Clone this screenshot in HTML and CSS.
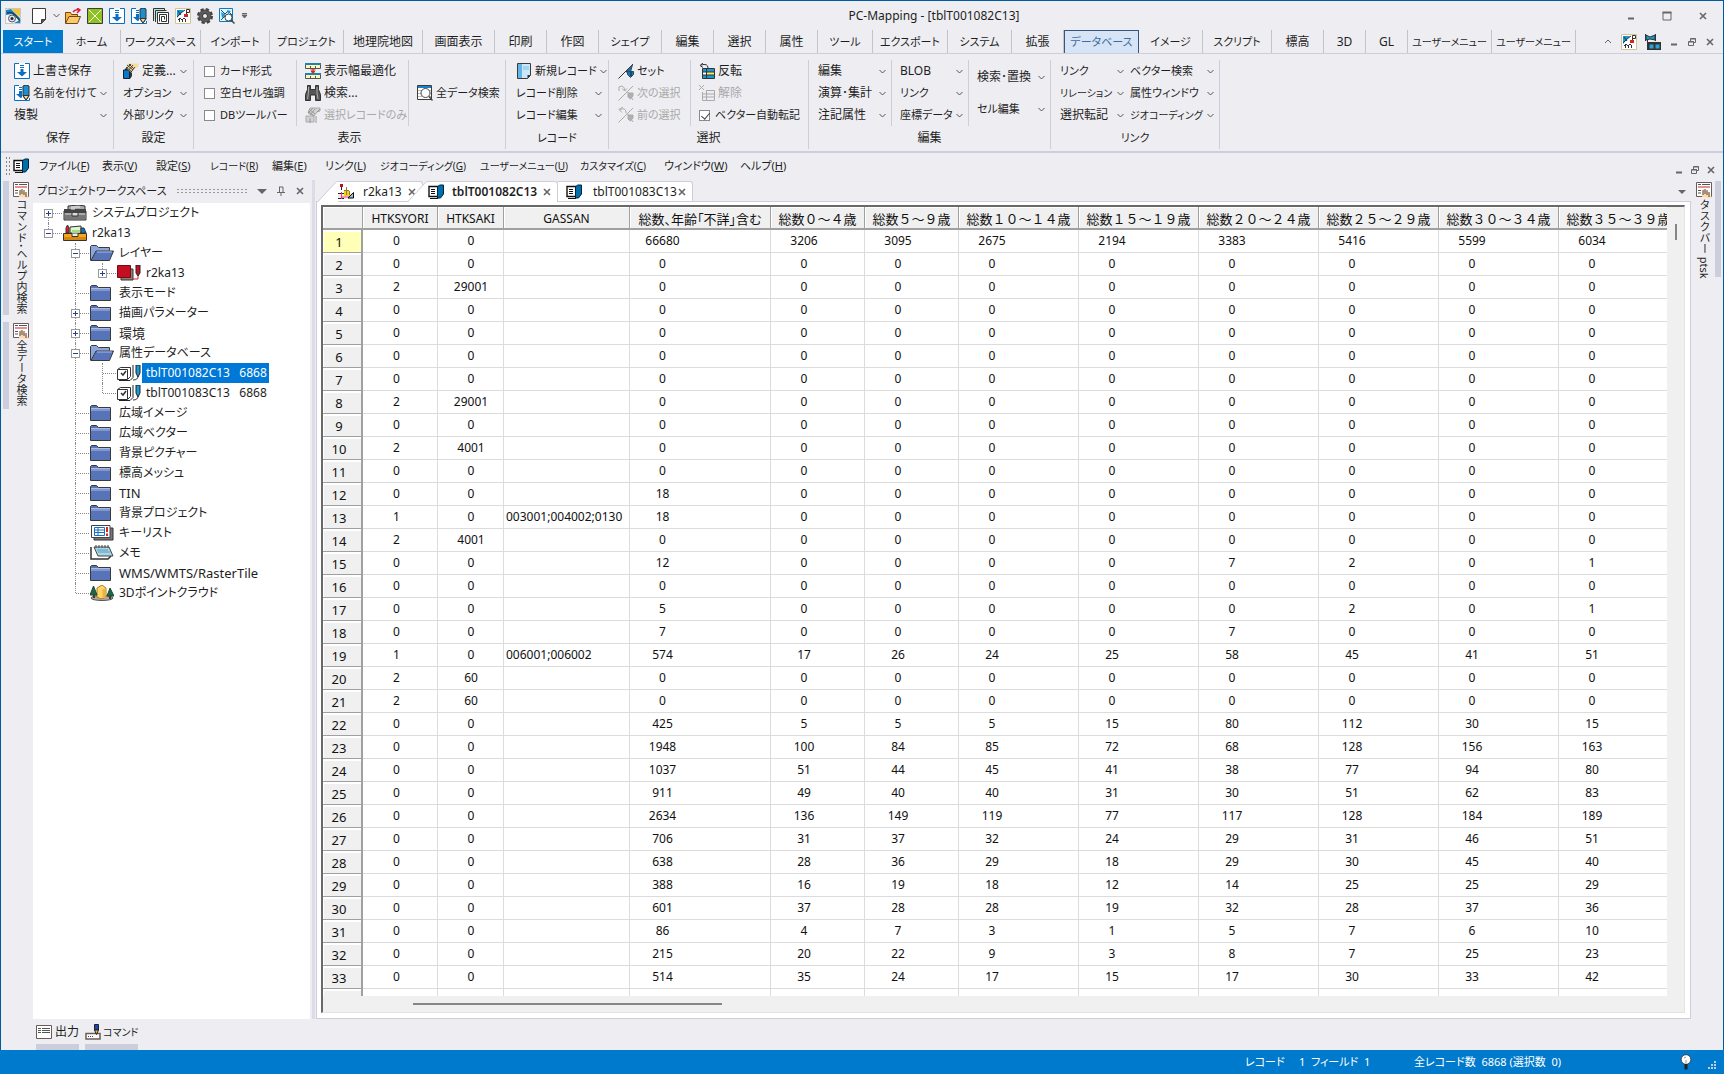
FILE: index.html
```html
<!DOCTYPE html>
<html lang="ja">
<head>
<meta charset="utf-8">
<title>PC-Mapping - [tblT001082C13]</title>
<link rel="stylesheet" href="styles.css">
</head>
<body>
<svg class="defs" aria-hidden="true">
<symbol id="app" viewBox="0 0 16 16"><rect x=".5" y=".5" width="15" height="15" fill="#f4f6f8" stroke="#c8c8c8"/><path d="M1 2l5-1 9 9v5H9l6-3-8-6-6 1z" fill="#1686c9"/><path d="M6 1h9v8z" fill="#f5c531"/><path d="M2 5q5-2 9 3l4 5" fill="none" stroke="#245" stroke-width="1.500"/><circle cx="7" cy="10.500" r="3.500" fill="#dde7ee" stroke="#556"/><circle cx="7" cy="10.500" r="1.500" fill="#223"/></symbol>
<symbol id="page" viewBox="0 0 16 16"><path d="M1.500.5h13v11l-4 4h-9z" fill="#fff" stroke="#3c3c3c"/><path d="M14.500 11.500h-4v4" fill="#555" stroke="#3c3c3c"/></symbol>
<symbol id="open" viewBox="0 0 16 16"><path d="M.5 15V4.500h5l1 2h6V9" fill="#ffb53a" stroke="#6b4a1a"/><path d="M.5 15.500L4 8.500h11.500l-3 7z" fill="#ffc96a" stroke="#6b4a1a"/><path d="M8 4q2-3 6-2M12 0l3 2-3 3" fill="none" stroke="#e01b3c" stroke-width="1.500"/></symbol>
<symbol id="green" viewBox="0 0 16 16"><path fill="#8dc21f" stroke="#3c3c3c" d="M.5.5h15v15H.5z"/><path d="M2 2l12 12M14 2L2 14" stroke="#fff"/></symbol>
<symbol id="save" viewBox="0 0 16 16"><path fill="#fff" stroke="#0a6fc2" d="M5 .5H.5v15h15V.5H11"/><path d="M6 2.500h4M6 4.500h4" stroke="#0a6fc2"/><path d="M6.500 6h3v3H13l-5 4.500L3 9h3.500z" fill="#0a6fc2"/></symbol>
<symbol id="saveas" viewBox="0 0 16 16"><path fill="#fff" stroke="#0a6fc2" d="M5 .5H.5v15h15V13"/><path d="M5 2.500h3M5 4.500h3" stroke="#0a6fc2"/><path d="M5 6h3v6.500L6.500 13 2 9h3z" fill="#0a6fc2"/><path d="M9 1q3-2 6 0v10l-3 4-3-4z" fill="#1b8fd0" stroke="#333"/><path d="M9 10.500h6l-3 4.500z" fill="#ffcf9a" stroke="#333"/></symbol>
<symbol id="spiral" viewBox="0 0 16 16"><path d="M.5 13V.5h11V3" fill="#bfe3d6" stroke="#333"/><path d="M2.500 14V2.500h11" fill="none" stroke="#333"/><path d="M4.500 4.500h11v11h-11z" fill="#fff" stroke="#333"/><path d="M6.500 13.500v-7h7v7h-5v-5h3v3" fill="none" stroke="#333"/></symbol>
<symbol id="map" viewBox="0 0 16 16"><path fill="#fff" stroke="#d4c594" d="M.5.5h15v15H.5z"/><path d="M2 2h7L2 10z" fill="#0b9bd8"/><path d="M2 9l4-4 4-3M3 3l3 4M4.500 14v-4M7.500 14v-3M10.500 14v-3M3 12l2-2 2 2 2-2 2 2M11.500 7V1.500h3v3h-3" stroke="#333" fill="none"/><path d="M9 6h4v3H9z" fill="#d8222a"/></symbol>
<symbol id="gear" viewBox="0 0 16 16"><circle cx="8" cy="8" r="6.500" fill="#555" stroke="#444" stroke-width="3" stroke-dasharray="3.100 2"/><circle cx="8" cy="8" r="5.800" fill="#5a5a5a"/><circle cx="8" cy="8" r="2.500" fill="#eee" stroke="#333"/></symbol>
<symbol id="mapsearch" viewBox="0 0 16 16"><path fill="#e8f5fc" stroke="#0a78c2" d="M.5.5h13v13H.5z"/><path d="M2 2l4 4 3-3 4 4M2 12l4-4" stroke="#156" fill="none"/><path d="M2 4l5 3-4 3zM8 2l4 1-3 3z" fill="#1c9bd8"/><circle cx="9.500" cy="9.500" r="3.500" fill="#fff" stroke="#444"/><path d="M12 12l3.500 3.500" stroke="#444" stroke-width="1.500"/></symbol>
<symbol id="define" viewBox="0 0 16 16"><path d="M2 6l1-1h6v8l-2 3H2z" fill="#333"/><path d="M.5 7h6v8.500h-6z" fill="#0a78c8" stroke="#123"/><path d="M5 .5h10.500V4L12 5l-3 5-6-5z" fill="#f6dd9e"/><path d="M3 4l6 5M4 2l6 5M6 1l5 5M3 6l5-5M5 8l5-6M8 9l4-5" stroke="#444"/></symbol>
<symbol id="fit" viewBox="0 0 16 16"><path fill="#fff9b0" stroke="#555" d="M.5 1.500h15v4H.5zM.5 11.500h15v4H.5z"/><path d="M0 1h16M0 11h16" stroke="#1c7fc0" stroke-width="2"/><path d="M5.500 3v2M10.500 3v2M5.500 13v2M10.500 13v2" stroke="#555"/><path d="M8 6v4M6 8.500L8 10l2-1.500zM5.500 7h5" fill="#d22" stroke="#d22"/></symbol>
<symbol id="bino" viewBox="0 0 16 16"><path d="M2.500.5h3v4h5v-4h3v4l2 5v6h-5V10H5.500v5.500h-5v-6l2-5z" fill="#555" stroke="#333"/><path d="M3.500 2v5l-1 7M12 2v6l1 6" stroke="#aaa" fill="none"/></symbol>
<symbol id="handg" viewBox="0 0 16 16"><path d="M1 9h8v6H1zM5 1h10v3l-3 1-3 4-6-3z" fill="#d2d2d2" stroke="#aaa"/><path d="M3 4l6 5M4 2l6 5M3 6l5-5M5 8l5-6M11 9v7M5 11v5M12 5l3-3" stroke="#999" fill="none"/></symbol>
<symbol id="dsearch" viewBox="0 0 16 16"><path fill="#fff" stroke="#3c3c3c" d="M.5.5h14v14H.5z"/><path d="M1 2h13" stroke="#1683cc" stroke-width="2"/><path d="M1 5.500h13M1 8.500h13M1 11.500h13" stroke="#bbb"/><circle cx="8.500" cy="8" r="4.500" fill="#fff" stroke="#444"/><path d="M12 11.500l3.500 4" stroke="#444" stroke-width="1.500"/></symbol>
<symbol id="newrec" viewBox="0 0 16 16"><path d="M1.500.5h13v12l-3 3h-10z" fill="#c9e9fb" stroke="#3c3c3c"/><path d="M2 1h4v14H2z" fill="#63b6e6"/><path d="M7 4h6M7 6h6" stroke="#7fbfe6"/><path d="M14.500 12h-3v3.500" fill="#333"/></symbol>
<symbol id="set" viewBox="0 0 16 16"><path d="M.5 15.500L15 1" stroke="#333"/><path d="M14.500 1.500L8 9h4.500z" fill="#127cb8" stroke="#345"/><path d="M9.500 8.500h6v3l-3 3-3-3z" fill="#127cb8" stroke="#345"/><path d="M13 9v4" stroke="#024"/></symbol>
<symbol id="next" viewBox="0 0 16 16"><path d="M.5 15.500L15 1M1 6V2q5-3 6 4M4 3.500L6.500 6 9 3.500M9 6l6 9" stroke="#aaa" fill="none"/><path d="M10 8h5v3l-2.500 3L10 12z" fill="#b0b0b0" stroke="#aaa"/></symbol>
<symbol id="prev" viewBox="0 0 16 16"><path d="M.5 15.500L15 1M8 6Q8 0 2 2.500M5 0L1 2.500l3 3M9 6l6 9" stroke="#aaa" fill="none"/><path d="M10 8h5v3l-2.500 3L10 12z" fill="#b0b0b0" stroke="#aaa"/></symbol>
<symbol id="invert" viewBox="0 0 16 16"><path d="M9 5Q9 0 2 2M4 0L1 2.500l3 2" stroke="#333" fill="none"/><path fill="#fff" stroke="#333" d="M3.500 5.500h12v10h-12z"/><path d="M4 6h11v3H4zM4 12h11v3H4z" fill="#149bd6"/><path d="M8 9h7v3H8z" fill="#ffe76a"/><path d="M7.500 6v9M4 9h11M4 12h11" stroke="#333"/></symbol>
<symbol id="release" viewBox="0 0 16 16"><path d="M0 0l5 5M5 0L0 5M3.500 7v8.500h12V5.500H7M3.500 9h12M3.500 12h12M7.500 6v9" stroke="#aaa" fill="none"/></symbol>
<symbol id="chev" viewBox="0 0 7 7"><path d="M.5 2l3 3 3-3" fill="none" stroke="#555"/></symbol>
<symbol id="flags" viewBox="0 0 16 16"><path d="M.5 0v7M10.500 0v7M1 1l4 2 5-2v5L5 5 1 6z" fill="#1a93d0" stroke="#333"/><path d="M3 8.500h13V16H3zM2.500 6v10" fill="#333" stroke="#333"/><path d="M4.500 10.500h4v4h-4zM10.500 10.500h4v4h-4z" fill="#27a5dd"/></symbol>
<symbol id="min" viewBox="0 0 10 10"><path d="M2 7.500h6" stroke="#666" stroke-width="2"/></symbol>
<symbol id="max" viewBox="0 0 10 10"><path d="M1 1.500h8v7.500H1z" fill="none" stroke="#666"/><path d="M.5 1.500h9" stroke="#666" stroke-width="2"/></symbol>
<symbol id="restore" viewBox="0 0 10 10"><path d="M1.500 4.500h5v4h-5zM3.500 4V1.500h5v4H7M2 5h5M4 2h5" fill="none" stroke="#666"/></symbol>
<symbol id="x" viewBox="0 0 10 10"><path d="M2 2l6 6M8 2L2 8" stroke="#666" stroke-width="1.600"/></symbol>
<symbol id="db" viewBox="0 0 16 16"><path d="M1 2.500h9v10H1z" fill="#fff" stroke="#111" stroke-width="1.400"/><path d="M3 5.500h4M3 7.500h4M3 9.500h4" stroke="#111"/><path d="M2 14.500h8" stroke="#111"/><path d="M9.500 3l2-2h4v9l-3 4h-3z" fill="#006fa8" stroke="#024"/></symbol>
<symbol id="rail" viewBox="0 0 16 16"><path fill="#fff" stroke="#6b5a5a" d="M.5.500h15v14H.5z"/><path d="M2 2.500h3M6 2.500h8M2 8.500h3M2 11h3" stroke="#555"/><path d="M2 5h12" stroke="#c22"/><path d="M6 15l1-8 6 4 3 5z" fill="#ffd9ad"/><path d="M7 8v5M9 7v5M11 8v5M13 10v5" stroke="#543"/></symbol>
<symbol id="mapdoc" viewBox="0 0 16 16"><path d="M0 9h16v6H0z" fill="#eed"/><path d="M0 9.500h10M0 14.500h6" stroke="#222"/><path d="M3.500 3v3" stroke="#222"/><path d="M2 0h3v3H2z" fill="#b12"/><path d="M6 7h6v5H6z" fill="#f2d313"/><path d="M8.500 3v8M6 6.500h5M11.500 7v4" stroke="#974"/><path d="M3 13h9M3.500 8v7" stroke="#f0308a"/><path d="M10 14l5.500-5.500V14z" fill="#9bd" stroke="#111"/></symbol>
<symbol id="sys" viewBox="0 0 24 16"><path d="M5 6V1l10-1 7 1v6M1 6h22v9H1z" fill="#aaa" stroke="#333"/><path d="M1 4h22v4H1z" fill="#444"/><path d="M8 2h9M8 4h4" stroke="#eee"/><path d="M2 12h21" stroke="#777" stroke-width="4"/><path d="M9 8v3h6V8" fill="#ddd" stroke="#333"/></symbol>
<symbol id="proj" viewBox="0 0 24 16"><path d="M7 8V2l11-1v7z" fill="#dff5cf" stroke="#333"/><path d="M9 5h8v4H9z" fill="#a8d884"/><path d="M3 8V3l1.500-3L6 3v5z" fill="#d22" stroke="#333"/><path d="M18 3h3l2 5h-5z" fill="#0b7ac2" stroke="#333"/><path d="M.5 8.500h23v7H.5z" fill="#f4a722" stroke="#333"/><path d="M1 12h22v3H1z" fill="#d88a10"/><path d="M9 8.500v3h6v-3" stroke="#333" fill="#eee"/></symbol>
<symbol id="folder" viewBox="0 0 24 16"><path d="M.5 15.500V1.500l1-1h5l2 2h12v13z" fill="#5874b8" stroke="#3a3a3a"/><path d="M1 3.500h19M1 5h19" stroke="#a9bbe6"/></symbol>
<symbol id="folderopen" viewBox="0 0 24 16"><path d="M.5 15.500V1.500l1-1h5l2 2h11v3" fill="#8ea6de" stroke="#3a3a3a"/><path d="M1 15.500l5-9.500h17.500l-4 9.500z" fill="#5874b8" stroke="#3a3a3a"/><path d="M7 7h15" stroke="#a9bbe6"/></symbol>
<symbol id="layer" viewBox="0 0 24 16"><path d="M4 4h12v11H4z" fill="#8f8072" stroke="#333"/><path d="M.5.500h13v12H.5z" fill="#c40f22" stroke="#7a0a14"/><path d="M19 0h4v8l-2 3-2-3z" fill="#c91022" stroke="#222"/><path d="M21 11v3h-5" stroke="#d22" fill="none"/></symbol>
<symbol id="table" viewBox="0 0 24 16"><path d="M.5 4.500l3-2h10v9l-3 3H.5z" fill="#fff" stroke="#333"/><path d="M1 4.500h9.500v9.500" fill="none" stroke="#333"/><path d="M4 8l2 2 3-4" fill="none" stroke="#333" stroke-width="1.500"/><path d="M2 15.500h11l3-3V0" fill="none" stroke="#222"/><path d="M19 0h4v8l-2 4-2-4z" fill="#169bd8" stroke="#222"/><path d="M16 15q5 0 5-4" fill="none" stroke="#333"/></symbol>
<symbol id="keylist" viewBox="0 0 24 16"><path d="M4 3h19v12H4z" fill="#777" stroke="#333"/><path d="M1.500.5H20v12H1.500z" fill="#fff" stroke="#444"/><path d="M4.500 2.500h10v8h-10zM4.500 5h10M4.500 7.500h10M8 2v9" fill="none" stroke="#1272c4"/><path d="M17 2v5M17 8.500V11" stroke="#d22" stroke-width="2"/></symbol>
<symbol id="memo" viewBox="0 0 24 16"><path d="M1 2v12h17l3-3" fill="#fff" stroke="#333" stroke-width="1.500"/><path d="M4 2h15l4 9H8z" fill="#a9d8ea" stroke="#444"/><path d="M7 5h11M8 7h12" stroke="#5a9ab8"/><path d="M6 0v3M9 0v3M12 0v3M15 0v3M18 0v3" stroke="#444"/></symbol>
<symbol id="cloud" viewBox="0 0 24 16"><ellipse cx="12" cy="13" rx="11" ry="2.500" fill="#aaa" stroke="#555"/><path d="M7 3l5-3 4 3v9l-5 2-4-2z" fill="#ffd766" stroke="#b07a22"/><path d="M14 4v9" stroke="#eeb144" stroke-width="3"/><path d="M3.500 1L7 10H0zM20 3l4 8h-7z" fill="#1c6a43" stroke="#243"/><path d="M4 10v3M20 11v3" stroke="#532" stroke-width="2"/></symbol>
<symbol id="out" viewBox="0 0 16 16"><path fill="#fff" stroke="#6b5a5a" d="M.5 1.500h15v13H.5z"/><path d="M2 4.500h3M6 4.500h8M2 6.500h3M6 6.500h8M2 8.500h3M6 8.500h8" stroke="#555"/></symbol>
<symbol id="cmd" viewBox="0 0 16 16"><path d="M1 9.500h14V15H1z" fill="#fff" stroke="#6b5a5a" stroke-width="1.500"/><path d="M3 12.500h5" stroke="#444" stroke-dasharray="1 1"/><path d="M9.500.5h4V6h-4z" fill="#1447c4" stroke="#222"/><path d="M9.500 6h4l-2 4.500z" fill="#ffb54a" stroke="#222"/></symbol>
<symbol id="bulb" viewBox="0 0 16 16"><circle cx="8" cy="5.500" r="4.800" fill="#fff" stroke="#333" stroke-width=".8"/><path d="M6.500 10h3v5.500h-3z" fill="#222"/><path d="M6 4l2-1M8 6v3" stroke="#999"/></symbol>
<symbol id="pin" viewBox="0 0 10 10"><path d="M3 1h4v5M3.500 1v5M1 6.500h8M5 7v3" stroke="#666" fill="none"/></symbol>
<symbol id="slope" viewBox="0 0 20 21"><path d="M0 21L17 2q1-1.500 3-1.500V21z" fill="#fff"/><path d="M0 20.500L17 2q1-1.500 3-1.500" fill="none" stroke="#cccedb"/></symbol>
</svg>
<div class="window">
<header class="titlebar">
<div class="quick">
<svg class="i"><use href="#app"/></svg>
<button class="q1" aria-label="新規"><svg class="i"><use href="#page"/></svg></button>
<button class="c" aria-label="新規メニュー"><svg class="v"><use href="#chev"/></svg></button>
<button aria-label="開く"><svg class="i"><use href="#open"/></svg></button>
<button aria-label="閉じる"><svg class="i"><use href="#green"/></svg></button>
<button aria-label="保存"><svg class="i"><use href="#save"/></svg></button>
<button aria-label="名前を付けて保存"><svg class="i"><use href="#saveas"/></svg></button>
<button aria-label="複製"><svg class="i"><use href="#spiral"/></svg></button>
<button aria-label="地図"><svg class="i"><use href="#map"/></svg></button>
<button aria-label="設定"><svg class="i"><use href="#gear"/></svg></button>
<button aria-label="地図検索"><svg class="i"><use href="#mapsearch"/></svg></button>
<button class="c" aria-label="カスタマイズ"><svg class="v" viewBox="0 0 7 7"><path d="M1 1.500h5M1 3h5L3.500 6z" fill="#666" stroke="#666"/></svg></button>
</div>
<h1>PC-Mapping - [tblT001082C13]</h1>
<div class="winbtns"><button aria-label="最小化"><svg class="w"><use href="#min"/></svg></button><button aria-label="最大化"><svg class="w"><use href="#max"/></svg></button><button aria-label="閉じる"><svg class="w"><use href="#x"/></svg></button></div>
</header>
<nav class="tabs">
<button class="start">スタート</button><button>ホーム</button><button>ワークスペース</button><button>インポート</button><button>プロジェクト</button><button class="kj">地理院地図</button><button class="kj">画面表示</button><button class="kj">印刷</button><button class="kj">作図</button><button>シェイプ</button><button class="kj">編集</button><button class="kj">選択</button><button class="kj">属性</button><button>ツール</button><button>エクスポート</button><button>システム</button><button class="kj">拡張</button><button class="on">データベース</button><button>イメージ</button><button>スクリプト</button><button class="kj">標高</button><button class="kj">3D</button><button class="kj">GL</button><button class="long">ユーザーメニュー</button><button class="long">ユーザーメニュー</button>
<div class="tabtools"><button aria-label="折りたたむ"><svg class="w"><path d="M2 6l3-3 3 3" stroke="#666" fill="none"/></svg></button><button aria-label="地図"><svg class="i"><use href="#map"/></svg></button><button aria-label="ウィンドウ"><svg class="i"><use href="#flags"/></svg></button><button aria-label="最小化"><svg class="w"><use href="#min"/></svg></button><button aria-label="元に戻す"><svg class="w"><use href="#restore"/></svg></button><button aria-label="閉じる"><svg class="w"><use href="#x"/></svg></button></div>
</nav>
<section class="ribbon">
<div class="group g1"><div class="cols"><div class="col">
<button class="kj"><svg class="i"><use href="#save"/></svg>上書き保存</button>
<button><svg class="i"><use href="#saveas"/></svg>名前を付けて<svg class="v"><use href="#chev"/></svg></button>
<button class="kj">複製<svg class="v"><use href="#chev"/></svg></button></div></div><h2>保存</h2></div>
<div class="group g2"><div class="cols"><div class="col">
<button class="kj"><svg class="i"><use href="#define"/></svg>定義...<svg class="v"><use href="#chev"/></svg></button>
<button>オプション<svg class="v"><use href="#chev"/></svg></button>
<button>外部リンク<svg class="v"><use href="#chev"/></svg></button></div></div><h2>設定</h2></div>
<div class="group g3"><div class="cols"><div class="col">
<label><input type="checkbox">カード形式</label>
<label><input type="checkbox">空白セル強調</label>
<label><input type="checkbox">DBツールバー</label></div>
<div class="col sep">
<button class="kj"><svg class="i"><use href="#fit"/></svg>表示幅最適化</button>
<button class="kj"><svg class="i"><use href="#bino"/></svg>検索...</button>
<button disabled><svg class="i"><use href="#handg"/></svg>選択レコードのみ</button></div>
<div class="col sep mid"><button><svg class="i"><use href="#dsearch"/></svg>全データ検索</button></div></div><h2>表示</h2></div>
<div class="group g4"><div class="cols"><div class="col">
<button><svg class="i"><use href="#newrec"/></svg>新規レコード<svg class="v"><use href="#chev"/></svg></button>
<button>レコード削除<svg class="v"><use href="#chev"/></svg></button>
<button>レコード編集<svg class="v"><use href="#chev"/></svg></button></div></div><h2 class="kana">レコード</h2></div>
<div class="group g5"><div class="cols"><div class="col">
<button><svg class="i"><use href="#set"/></svg>セット</button>
<button disabled><svg class="i"><use href="#next"/></svg>次の選択</button>
<button disabled><svg class="i"><use href="#prev"/></svg>前の選択</button></div>
<div class="col sep">
<button class="kj"><svg class="i"><use href="#invert"/></svg>反転</button>
<button class="kj" disabled><svg class="i"><use href="#release"/></svg>解除</button>
<label><input type="checkbox" checked>ベクター自動転記</label></div></div><h2>選択</h2></div>
<div class="group g6"><div class="cols"><div class="col">
<button class="kj">編集<svg class="v"><use href="#chev"/></svg></button>
<button class="kj">演算･集計<svg class="v"><use href="#chev"/></svg></button>
<button class="kj">注記属性<svg class="v"><use href="#chev"/></svg></button></div>
<div class="col sep">
<button class="kj">BLOB<svg class="v"><use href="#chev"/></svg></button>
<button>リンク<svg class="v"><use href="#chev"/></svg></button>
<button>座標データ<svg class="v"><use href="#chev"/></svg></button></div>
<div class="col sep two">
<button class="kj">検索･置換<svg class="v"><use href="#chev"/></svg></button>
<button>セル編集<svg class="v"><use href="#chev"/></svg></button></div></div><h2>編集</h2></div>
<div class="group g7"><div class="cols"><div class="col">
<button>リンク<svg class="v"><use href="#chev"/></svg></button>
<button class="long">リレーション<svg class="v"><use href="#chev"/></svg></button>
<button class="kj">選択転記<svg class="v"><use href="#chev"/></svg></button></div>
<div class="col">
<button>ベクター検索<svg class="v"><use href="#chev"/></svg></button>
<button>属性ウィンドウ<svg class="v"><use href="#chev"/></svg></button>
<button class="long">ジオコーディング<svg class="v"><use href="#chev"/></svg></button></div></div><h2 class="kana">リンク</h2></div>
</section>
<nav class="menu">
<span class="grip"></span><svg class="i"><use href="#db"/></svg>
<button>ファイル(<u>F</u>)</button><button>表示(<u>V</u>)</button><button>設定(<u>S</u>)</button><button class="long">レコード(<u>R</u>)</button><button>編集(<u>E</u>)</button><button>リンク(<u>L</u>)</button><button class="long">ジオコーディング(<u>G</u>)</button><button class="long">ユーザーメニュー(<u>U</u>)</button><button class="long">カスタマイズ(<u>C</u>)</button><button>ウィンドウ(<u>W</u>)</button><button>ヘルプ(<u>H</u>)</button>
<div class="mdi"><button aria-label="最小化"><svg class="w"><use href="#min"/></svg></button><button aria-label="元に戻す"><svg class="w"><use href="#restore"/></svg></button><button aria-label="閉じる"><svg class="w"><use href="#x"/></svg></button></div>
</nav>
<main>
<aside class="rail"><button class="r1"><svg class="i"><use href="#rail"/></svg><span>コマンド･ヘルプ内検索</span></button><button class="r2"><svg class="i"><use href="#rail"/></svg><span>全データ検索</span></button></aside>
<section class="panel">
<header><h2>プロジェクトワークスペース</h2><span class="dots"></span><button aria-label="メニュー"><svg class="w"><path d="M0 3h10L5 8z" fill="#666"/></svg></button><button aria-label="固定"><svg class="w"><use href="#pin"/></svg></button><button aria-label="閉じる"><svg class="w"><use href="#x"/></svg></button></header>
<ul class="tree">
<li><div class="row"><button class="ex" aria-label="展開"><svg class="pm"><path d="M1 3.500h5M3.500 1v5"/></svg></button><svg class="t"><use href="#sys"/></svg><span>システムプロジェクト</span></div></li>
<li><div class="row"><button class="ex" aria-label="折りたたむ"><svg class="pm"><path d="M1 3.500h5"/></svg></button><svg class="t"><use href="#proj"/></svg><span>r2ka13</span></div>
<ul>
<li><div class="row"><button class="ex" aria-label="折りたたむ"><svg class="pm"><path d="M1 3.500h5"/></svg></button><svg class="t"><use href="#folderopen"/></svg><span>レイヤー</span></div>
<ul><li><div class="row"><button class="ex" aria-label="展開"><svg class="pm"><path d="M1 3.500h5M3.500 1v5"/></svg></button><svg class="t"><use href="#layer"/></svg><span>r2ka13</span></div></li></ul></li>
<li><div class="row"><i></i><svg class="t"><use href="#folder"/></svg><span>表示モード</span></div></li>
<li><div class="row"><button class="ex" aria-label="展開"><svg class="pm"><path d="M1 3.500h5M3.500 1v5"/></svg></button><svg class="t"><use href="#folder"/></svg><span>描画パラメーター</span></div></li>
<li><div class="row"><button class="ex" aria-label="展開"><svg class="pm"><path d="M1 3.500h5M3.500 1v5"/></svg></button><svg class="t"><use href="#folder"/></svg><span class="big">環境</span></div></li>
<li><div class="row"><button class="ex" aria-label="折りたたむ"><svg class="pm"><path d="M1 3.500h5"/></svg></button><svg class="t"><use href="#folderopen"/></svg><span>属性データベース</span></div>
<ul><li><div class="row on"><i></i><svg class="t"><use href="#table"/></svg><span class="sel">tblT001082C13&nbsp;&nbsp; 6868</span></div></li>
<li><div class="row"><i></i><svg class="t"><use href="#table"/></svg><span>tblT001083C13&nbsp;&nbsp; 6868</span></div></li></ul></li>
<li><div class="row"><i></i><svg class="t"><use href="#folder"/></svg><span>広域イメージ</span></div></li>
<li><div class="row"><i></i><svg class="t"><use href="#folder"/></svg><span>広域ベクター</span></div></li>
<li><div class="row"><i></i><svg class="t"><use href="#folder"/></svg><span>背景ピクチャー</span></div></li>
<li><div class="row"><i></i><svg class="t"><use href="#folder"/></svg><span>標高メッシュ</span></div></li>
<li><div class="row"><i></i><svg class="t"><use href="#folder"/></svg><span class="big">TIN</span></div></li>
<li><div class="row"><i></i><svg class="t"><use href="#folder"/></svg><span>背景プロジェクト</span></div></li>
<li><div class="row"><i></i><svg class="t"><use href="#keylist"/></svg><span>キーリスト</span></div></li>
<li><div class="row"><i></i><svg class="t"><use href="#memo"/></svg><span>メモ</span></div></li>
<li><div class="row"><i></i><svg class="t"><use href="#folder"/></svg><span class="big">WMS/WMTS/RasterTile</span></div></li>
<li><div class="row"><i></i><svg class="t"><use href="#cloud"/></svg><span>3Dポイントクラウド</span></div></li>
</ul></li>
</ul>
</section>
<div class="splitter"></div>
<section class="docs">
<div class="doctabs">
<div class="tab t1"><svg class="slope"><use href="#slope"/></svg><button><svg class="i"><use href="#mapdoc"/></svg>r2ka13</button><button aria-label="閉じる"><svg class="w"><use href="#x"/></svg></button></div>
<div class="tab t2"><svg class="slope"><use href="#slope"/></svg><button><svg class="i"><use href="#db"/></svg>tblT001082C13</button><button aria-label="閉じる"><svg class="w"><use href="#x"/></svg></button></div>
<div class="tab t3"><button><svg class="i"><use href="#db"/></svg>tblT001083C13</button><button aria-label="閉じる"><svg class="w"><use href="#x"/></svg></button></div>
<button class="more" aria-label="一覧"><svg class="w"><path d="M1 3h8L5 7z" fill="#666"/></svg></button>
</div>
<div class="doc"><div class="sheet">
<div class="view">
<table>
<colgroup><col class="w40"><col class="w75"><col class="w66"><col class="w126"><col class="w141"><col class="w94"><col class="w94"><col class="w120"><col class="w120"><col class="w120"><col class="w120"><col class="w120"><col class="w120"></colgroup>
<thead><tr><th></th><th>HTKSYORI</th><th>HTKSAKI</th><th>GASSAN</th><th>総数、年齢「不詳」含む</th><th>総数０～４歳</th><th>総数５～９歳</th><th>総数１０～１４歳</th><th>総数１５～１９歳</th><th>総数２０～２４歳</th><th>総数２５～２９歳</th><th>総数３０～３４歳</th><th>総数３５～３９歳</th></tr></thead>
<tbody>
<tr class="cur"><th>1<td>0<td>0<td><td>66680<td>3206<td>3095<td>2675<td>2194<td>3383<td>5416<td>5599<td>6034
<tr><th>2<td>0<td>0<td><td>0<td>0<td>0<td>0<td>0<td>0<td>0<td>0<td>0
<tr><th>3<td>2<td>29001<td><td>0<td>0<td>0<td>0<td>0<td>0<td>0<td>0<td>0
<tr><th>4<td>0<td>0<td><td>0<td>0<td>0<td>0<td>0<td>0<td>0<td>0<td>0
<tr><th>5<td>0<td>0<td><td>0<td>0<td>0<td>0<td>0<td>0<td>0<td>0<td>0
<tr><th>6<td>0<td>0<td><td>0<td>0<td>0<td>0<td>0<td>0<td>0<td>0<td>0
<tr><th>7<td>0<td>0<td><td>0<td>0<td>0<td>0<td>0<td>0<td>0<td>0<td>0
<tr><th>8<td>2<td>29001<td><td>0<td>0<td>0<td>0<td>0<td>0<td>0<td>0<td>0
<tr><th>9<td>0<td>0<td><td>0<td>0<td>0<td>0<td>0<td>0<td>0<td>0<td>0
<tr><th>10<td>2<td>4001<td><td>0<td>0<td>0<td>0<td>0<td>0<td>0<td>0<td>0
<tr><th>11<td>0<td>0<td><td>0<td>0<td>0<td>0<td>0<td>0<td>0<td>0<td>0
<tr><th>12<td>0<td>0<td><td>18<td>0<td>0<td>0<td>0<td>0<td>0<td>0<td>0
<tr><th>13<td>1<td>0<td>003001;004002;0130<td>18<td>0<td>0<td>0<td>0<td>0<td>0<td>0<td>0
<tr><th>14<td>2<td>4001<td><td>0<td>0<td>0<td>0<td>0<td>0<td>0<td>0<td>0
<tr><th>15<td>0<td>0<td><td>12<td>0<td>0<td>0<td>0<td>7<td>2<td>0<td>1
<tr><th>16<td>0<td>0<td><td>0<td>0<td>0<td>0<td>0<td>0<td>0<td>0<td>0
<tr><th>17<td>0<td>0<td><td>5<td>0<td>0<td>0<td>0<td>0<td>2<td>0<td>1
<tr><th>18<td>0<td>0<td><td>7<td>0<td>0<td>0<td>0<td>7<td>0<td>0<td>0
<tr><th>19<td>1<td>0<td>006001;006002<td>574<td>17<td>26<td>24<td>25<td>58<td>45<td>41<td>51
<tr><th>20<td>2<td>60<td><td>0<td>0<td>0<td>0<td>0<td>0<td>0<td>0<td>0
<tr><th>21<td>2<td>60<td><td>0<td>0<td>0<td>0<td>0<td>0<td>0<td>0<td>0
<tr><th>22<td>0<td>0<td><td>425<td>5<td>5<td>5<td>15<td>80<td>112<td>30<td>15
<tr><th>23<td>0<td>0<td><td>1948<td>100<td>84<td>85<td>72<td>68<td>128<td>156<td>163
<tr><th>24<td>0<td>0<td><td>1037<td>51<td>44<td>45<td>41<td>38<td>77<td>94<td>80
<tr><th>25<td>0<td>0<td><td>911<td>49<td>40<td>40<td>31<td>30<td>51<td>62<td>83
<tr><th>26<td>0<td>0<td><td>2634<td>136<td>149<td>119<td>77<td>117<td>128<td>184<td>189
<tr><th>27<td>0<td>0<td><td>706<td>31<td>37<td>32<td>24<td>29<td>31<td>46<td>51
<tr><th>28<td>0<td>0<td><td>638<td>28<td>36<td>29<td>18<td>29<td>30<td>45<td>40
<tr><th>29<td>0<td>0<td><td>388<td>16<td>19<td>18<td>12<td>14<td>25<td>25<td>29
<tr><th>30<td>0<td>0<td><td>601<td>37<td>28<td>28<td>19<td>32<td>28<td>37<td>36
<tr><th>31<td>0<td>0<td><td>86<td>4<td>7<td>3<td>1<td>5<td>7<td>6<td>10
<tr><th>32<td>0<td>0<td><td>215<td>20<td>22<td>9<td>3<td>8<td>7<td>25<td>23
<tr><th>33<td>0<td>0<td><td>514<td>35<td>24<td>17<td>15<td>17<td>30<td>33<td>42
<tr><th><td><td><td><td><td><td><td><td><td><td><td><td>
</tbody>
</table>
</div>
<div class="vscroll"><span></span></div>
<div class="hscroll"><span></span></div>
</div></div>
</section>
<aside class="rail right"><button class="r3"><svg class="i"><use href="#rail"/></svg><span>タスクバー ptsk</span></button></aside>
</main>
<div class="bottom"><button><svg class="i"><use href="#out"/></svg>出力</button><button class="k"><svg class="i"><use href="#cmd"/></svg>コマンド</button></div>
<footer><span class="s1">レコード&nbsp;&nbsp;&nbsp;&nbsp; 1&nbsp; フィールド&nbsp; 1</span><span class="s2">全レコード数&nbsp; 6868 (選択数&nbsp; 0)</span><svg class="i"><use href="#bulb"/></svg><svg class="size" viewBox="0 0 9 9"><path d="M6 0h2v2H6zM3 3h2v2H3zM6 3h2v2H6zM0 6h2v2H0zM3 6h2v2H3zM6 6h2v2H6z" fill="#b8cfe4"/></svg></footer>
</div>
</body>
</html>
```
FILE: styles.css
```css
* { box-sizing: border-box; }
body { margin: 0; }
.defs { position: absolute; width: 0; height: 0; }
.window {
  display: flex; flex-direction: column; height: 100vh; overflow: hidden;
  border-top: 1px solid #005a9e;
  background: #eeeef2; color: #1e1e1e;
  font: 12px/16px "Noto Sans", "Noto Sans CJK JP", sans-serif;
  font-feature-settings: "palt";
  white-space: nowrap;
}
button { border: 0; margin: 0; padding: 0; background: none; color: inherit; font: inherit; font-feature-settings: inherit; white-space: nowrap; display: flex; align-items: center; }
h1, h2 { margin: 0; font: inherit; }
svg { display: block; flex: none; }
.i { width: 16px; height: 16px; }
.v { width: 7px; height: 7px; }
.w { width: 10px; height: 10px; }
.titlebar, .tabs, .ribbon, .menu, main, .bottom { border: solid #005a9e; border-width: 0 1px; }

.titlebar { display: grid; grid-template-columns: 1fr auto 1fr; height: 29px; flex: none; align-items: center; }
.titlebar h1 { padding-left: 144px; }
.quick { display: flex; align-items: center; gap: 6px; padding-left: 4px; width: 0; }
.q1 { margin-left: 4px; }
.quick .c { width: 7px; }
.quick .c + button { margin-left: -1px; }
.winbtns { display: flex; justify-content: flex-end; gap: 26px; padding-right: 15px; }

.tabs {
  display: grid; height: 23px; flex: none; font-size: 11px;
  grid-template-columns: 60px 58px 80px 69px 74px 79px 72px 52px 52px 63px 52px 52px 52px 55px 75px 64px 52px 75px 64px 69px 52px 42px 42px 84px 84px 1fr;
  padding-left: 2px;
}
.tabs > button { justify-content: center; border-right: 1px solid #c4c4c8; }
.kj { font-size: 12px; }
.long { font-size: 10px; }
.tabs .start { background: #007acc; color: #fff; border: 0; }
.tabs .on { background: #d6e4f5; color: #3d6c9e; border: 1px solid #33587f; border-bottom: 0; }
.tabtools { display: flex; justify-content: flex-end; align-items: center; gap: 8px; padding-right: 8px; }

.ribbon { display: flex; height: 100px; flex: none; font-size: 11px; background: linear-gradient(#cccedb, #cccedb) top / 100% 1px no-repeat, linear-gradient(#cccedb, #cccedb) bottom / 100% 2px no-repeat; padding: 7px 0 4px 2px; }
.group { display: flex; flex-direction: column; border-right: 1px solid #cccedb; }
.group h2 { text-align: center; font-size: 12px; line-height: 24px; }
.group .kana { font-size: 11px; }
.cols { display: flex; height: 66px; }
.col { display: flex; flex-direction: column; flex: none; }
.mid { justify-content: center; }
.two { justify-content: space-evenly; gap: 4px; }
.col button, .col label { height: 22px; display: flex; align-items: center; gap: 3px; text-align: left; }
.col .v { margin-left: auto; }
.col button:disabled { color: #a8a8a8; }
.sep { border-left: 1px solid #cccedb; padding-left: 8px; }
input[type=checkbox] { appearance: none; width: 11px; height: 11px; margin: 0 2px 0 0; border: 1px solid #8a8a8a; background: #fff; position: relative; }
input[type=checkbox]:checked::after { content: ""; position: absolute; left: 3px; top: 0; width: 4px; height: 7px; border: solid #444; border-width: 0 1px 1px 0; transform: rotate(40deg); }
.g1 { width: 111px; } .g1 .cols { padding-left: 11px; } .g1 .col { width: 93px; }
.g2 { width: 80px; } .g2 .cols { padding-left: 9px; } .g2 .col { width: 64px; }
.g3 { width: 312px; } .g3 .cols { padding-left: 10px; } .g3 .col { width: 92px; } .g3 .col.sep { width: 112px; } .g3 .col.mid { width: 96px; }
.g4 { width: 103px; } .g4 .cols { padding-left: 10px; } .g4 .col { width: 86px; }
.g5 { width: 200px; } .g5 .cols { padding-left: 9px; } .g5 .col { width: 72px; } .g5 .col.sep { width: 112px; }
.g6 { width: 242px; } .g6 .cols { padding-left: 9px; } .g6 .col { width: 73px; padding-right: 5px; } .g6 .col.sep { width: 77px; } .g6 .two { padding-right: 0; }
.g7 { width: 169px; } .g7 .cols { padding-left: 9px; gap: 6px; } .g7 .col { width: 64px; } .g7 .col + .col { width: 84px; }

.menu { display: grid; grid-template-columns: 12px 26px 63px 54px 54px 62px 53px 55px 100px 100px 84px 76px 60px 1fr; height: 27px; flex: none; align-items: center; font-size: 11px; padding-bottom: 2px; }
.grip { margin-left: 4px; width: 5px; height: 20px; background: radial-gradient(#888 0 1px, transparent 1px) 0 0 / 3px 4px; }
.mdi { display: flex; justify-content: flex-end; gap: 6px; padding: 8px 7px 0 0; }

main { display: flex; flex: 1; min-height: 0; }
.rail { width: 32px; flex: none; display: flex; flex-direction: column; gap: 7px; padding: 1px 0 0 2px; }
.rail button { flex-direction: column; align-items: flex-start; gap: 1px; border-left: 6px solid #cccedb; padding: 1px 0 0 4px; }
.rail span { writing-mode: vertical-rl; font-size: 11px; line-height: 16px; }
.r1 { height: 134px; } .r2 { height: 87px; } .r3 { height: 96px; }
.rail.right { padding: 1px 2px 0 0; align-items: flex-end; }
.right button { border-left: 0; border-right: 6px solid #cccedb; padding: 1px 3px 0 0; }

.panel { width: 277px; flex: none; display: flex; flex-direction: column; }
.panel header { height: 23px; display: flex; align-items: center; gap: 9px; padding: 0 5px 2px 4px; }
.panel h2 { font-size: 11px; }
.dots { flex: 1; height: 5px; background: radial-gradient(#999 0 1px, transparent 1px) 0 0 / 4px 3px; }
.tree { flex: 1; background: #fff; margin: 0; padding: 0 0 0 11px; }
.tree ul { margin: 0; padding: 0 0 0 27px; }
.tree li { list-style: none; position: relative; }
.tree li::before { content: ""; position: absolute; left: 4px; top: 0; bottom: 0; border-left: 1px dotted #888; }
.tree > li:first-child::before { top: 10px; }
.tree li:last-child::before { bottom: auto; height: 10px; }
.row { display: flex; align-items: center; height: 20px; background: repeating-linear-gradient(90deg, #888 0 1px, #fff 1px 2px) 5px 10px / 16px 1px no-repeat; }
.row .t { width: 24px; height: 16px; background: #fff; }
.row span { padding: 0 2px; line-height: 20px; margin-left: 3px; }
.row .sel { background: #0078d7; color: #fff; margin-left: 1px; padding: 0 2px 0 4px; }
.row .big { font-size: 13px; }
.row i { width: 19px; }
.ex { width: 9px; height: 9px; margin-right: 10px; border: 1px solid #999; background: #fff; position: relative; }
.pm { width: 7px; height: 7px; stroke: #23408c; }
.splitter { width: 6px; flex: none; border: solid #eeeef2; border-width: 0 1px 0 2px; background: #dcdce8; }

.docs { flex: 1; min-width: 0; display: flex; flex-direction: column; }
.doctabs { display: flex; height: 22px; margin-bottom: -1px; padding: 1px 0 0 3px; position: relative; }
.tab { height: 20px; display: flex; align-items: center; justify-content: space-between; border: solid #cccedb; border-width: 1px 1px 0 0; border-radius: 0 3px 0 0; background: #fff; padding-right: 5px; position: relative; }
.tab button { gap: 8px; }
.slope { width: 20px; height: 21px; position: absolute; left: -20px; top: -1px; }
.t1 { width: 85px; margin-left: 19px; }
.t1 button:first-of-type { position: relative; gap: 9px; }
.t2 { width: 130px; margin-left: 5px; height: 21px; z-index: 1; font-weight: 600; }
.t3 { width: 135px; padding-left: 8px; }
.t3 button:first-of-type { gap: 11px; }
.more { margin-left: auto; padding-right: 4px; }
.doc { flex: 1; min-height: 0; border: 1px solid #cccedb; background: #fff; padding: 3px 5px 5px 4px; display: flex; }
.sheet { flex: 1; min-width: 0; border: 2px solid #696969; border-right: 1px solid #e3e3e3; border-bottom: 1px solid #e3e3e3; background: #f0f0f0; display: grid; grid-template: minmax(0, 1fr) 16px / minmax(0, 1fr) 17px; }
.view { overflow: hidden; background: #fff; }
.vscroll span { display: block; width: 2px; height: 16px; margin: 17px 0 0 8px; background: #868686; }
.hscroll span { display: block; width: 309px; height: 2px; margin: 7px 0 0 90px; background: #868686; }

table { table-layout: fixed; border-spacing: 0; width: 1356px; color: #111; }
.w40 { width: 40px; } .w75 { width: 75px; } .w66 { width: 66px; } .w126 { width: 126px; } .w141 { width: 141px; } .w94 { width: 94px; } .w120 { width: 120px; }
th { height: 23px; padding: 2px 0 0; font-weight: 400; background: #f0f0f0; border: solid #a0a0a0; border-width: 0 1px 2px 0; box-shadow: inset 1px 1px #fff; line-height: 18px; }
thead th:nth-child(n+5) { font-size: 13px; }
thead th:nth-child(n+6) { font-feature-settings: normal; }
tbody th { border-width: 0 2px 1px 0; font-size: 13px; padding-right: 6px; box-shadow: inset 1px 2px #fff; }
.cur th { background: #ffffb8; }
td { height: 23px; padding: 0; text-align: center; border: solid #dcdcdc; border-width: 0 1px 1px 0; line-height: 18px; }
td:nth-child(2) { padding-right: 7px; }
td:nth-child(3) { padding-left: 1px; }
td:nth-child(4) { text-align: left; padding-left: 2px; }
td:nth-child(5) { padding-right: 75px; }
td:nth-child(6), td:nth-child(7) { padding-right: 27px; }
td:nth-child(n+8) { padding-right: 53px; }

.bottom { display: flex; gap: 6px; height: 31px; flex: none; padding: 5px 0 0 35px; }
.bottom button { gap: 3px; padding-bottom: 4px; border-bottom: 6px solid #cccedb; }
.bottom .k { font-size: 10px; gap: 2px; }
footer { display: flex; align-items: center; height: 24px; flex: none; background: #007acc; color: #fff; font-size: 11px; padding-right: 7px; }
.s1 { margin-left: auto; width: 169px; }
.s2 { width: 264px; }
.size { width: 9px; height: 9px; margin: 6px 0 0 14px; }
```
